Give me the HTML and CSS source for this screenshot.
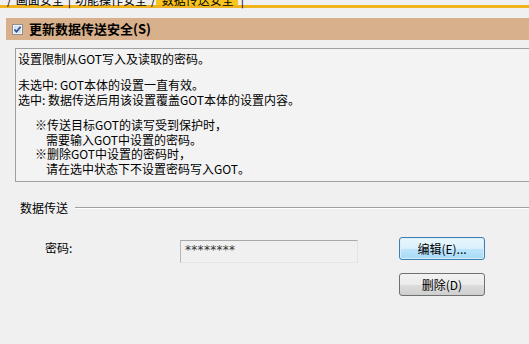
FILE: index.html
```html
<!DOCTYPE html>
<html lang="zh-CN">
<head>
<meta charset="utf-8">
<link rel="stylesheet" href="styles.css">
</head>
<body>
<div class="page">
  <div class="tabs">
    <span class="sep">/</span><span class="tab">画面安全</span><span class="sep">|</span><span class="tab">功能操作安全</span><span class="sep">/</span><span class="tab active">数据传送安全</span><span class="sep">|</span>
  </div>
  <div class="header">
    <svg class="check" width="11" height="11" viewBox="0 0 11 11">
      <rect x="0.5" y="0.5" width="10" height="10" fill="#f4f4f4" stroke="#8f8f8f"/>
      <rect x="2" y="2" width="7" height="7" fill="#cfe3f5"/>
      <path d="M2.5 5.5 L4.5 7.8 L8.6 2.8" fill="none" stroke="#2e4a8c" stroke-width="1.6"/>
    </svg>
    <span class="htext">更新数据传送安全(S)</span>
  </div>
  <div class="desc">
    <p>设置限制从GOT写入及读取的密码。</p>
    <p class="gap">未选中: GOT本体的设置一直有效。<br>选中: 数据传送后用该设置覆盖GOT本体的设置内容。</p>
    <div class="notes gap">
      <p class="note">※传送目标GOT的读写受到保护时，</p>
      <p class="cont">需要输入GOT中设置的密码。</p>
      <p class="note">※删除GOT中设置的密码时，</p>
      <p class="cont">请在选中状态下不设置密码写入GOT。</p>
    </div>
  </div>
  <div class="group">
    <span class="gtitle">数据传送</span><span class="gline"></span>
  </div>
  <div class="row">
    <span class="label">密码:</span>
    <span class="field">********</span>
    <button class="btn focus">编辑(E)...</button>
  </div>
  <div class="row2">
    <button class="btn">删除(D)</button>
  </div>
</div>
</body>
</html>
```
FILE: styles.css
```css
html, body {
  margin: 0;
  padding: 0;
}
body {
  background: #f0f0f0;
  width: 529px;
  height: 344px;
  overflow: hidden;
  font-family: "Noto Sans CJK SC", "Noto Sans", sans-serif;
  font-size: 12px;
  color: #000;
}
.page {
  width: 529px;
  height: 344px;
  overflow: hidden;
}
.tabs {
  margin-top: -6px;
  height: 11px;
  line-height: 12px;
  border-bottom: 3px solid #f0b41e;
  display: flex;
  padding-left: 4px;
  white-space: nowrap;
}
.sep {
  padding: 0 3px;
}
.tab {
  padding: 0 1px;
}
.tab.active {
  background: #f7c51e;
  padding: 0 4px 0 6px;
  margin-left: -3px;
}
.header {
  margin-top: 10px;
  margin-left: 6px;
  height: 22px;
  background: #d8b08b;
  display: flex;
  align-items: center;
  padding-left: 6px;
}
.check {
  display: block;
  margin-top: 1px;
}
.htext {
  margin-left: 6px;
  font-size: 13px;
  font-weight: bold;
  line-height: 16px;
}
.desc {
  margin-top: 8px;
  margin-left: 15px;
  width: 560px;
  border: 1px solid #a0a0a0;
  background: #f3f3f3;
  padding: 2px 0 0 2px;
  box-sizing: border-box;
  height: 134px;
  line-height: 15px;
}
.desc p {
  margin: 0;
}
.gap {
  margin-top: 11px !important;
}
.notes p {
  line-height: 14.5px;
}
.note {
  padding-left: 17px;
}
.cont {
  padding-left: 28px;
}
.group {
  margin-top: 18px;
  margin-left: 20px;
  display: flex;
  align-items: center;
  height: 16px;
  line-height: 16px;
}
.gline {
  flex: 1;
  margin-left: 7px;
  height: 0;
  border-top: 1px solid #a0a0a0;
  border-bottom: 1px solid #fff;
}
.row {
  margin-top: 21px;
  padding-left: 45px;
  display: flex;
  align-items: flex-start;
  height: 26px;
}
.label {
  width: 135px;
  line-height: 16px;
  margin-top: 3px;
}
.field {
  width: 178px;
  height: 23px;
  margin-top: 3px;
  box-sizing: border-box;
  border: 1px solid #c8c8c8;
  border-top-color: #a8a8a8;
  border-left-color: #b8b8b8;
  border-bottom-color: #e4e4e4;
  border-right-color: #e4e4e4;
  background: #f0f0f0;
  color: #333;
  font-family: "DejaVu Sans", sans-serif;
  font-size: 12px;
  line-height: 12px;
  padding: 3px 0 0 4px;
  letter-spacing: 0.3px;
}
.btn {
  width: 86px;
  height: 23px;
  margin: 0;
  padding: 0;
  box-sizing: border-box;
  border: 1px solid #707070;
  border-radius: 3px;
  background: linear-gradient(#f2f2f2 0%, #ebebeb 50%, #dddddd 51%, #cfcfcf 100%);
  font-family: "Noto Sans CJK SC", sans-serif;
  font-size: 12px;
  line-height: 16px;
  color: #000;
}
.btn.focus {
  margin-left: 41px;
  border-color: #3c7fb1;
  background: linear-gradient(#eaf6fd 0%, #d9f0fc 50%, #bee6fd 51%, #a7d9f5 100%);
  box-shadow: inset 0 0 0 1px #d8effb;
}
.row2 {
  margin-top: 10px;
  padding-left: 399px;
}
```
